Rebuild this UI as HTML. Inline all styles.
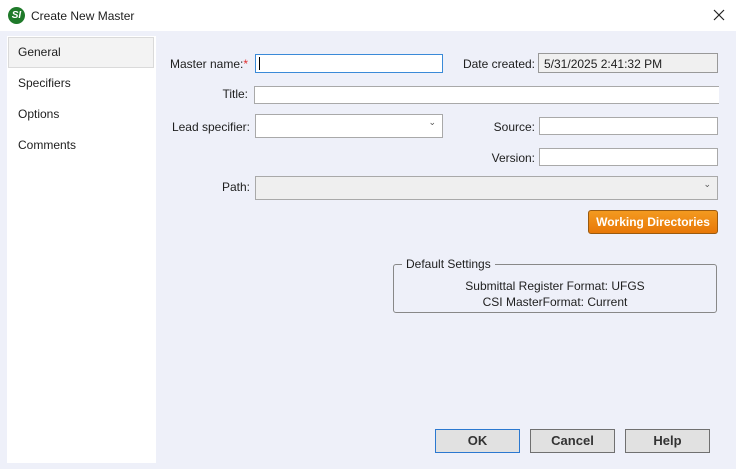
<!DOCTYPE html>
<html><head><style>
*{box-sizing:border-box;margin:0;padding:0}
body{width:736px;height:469px;position:relative;overflow:hidden;background:#eef0f9;font-family:"Liberation Sans",sans-serif;font-size:12px;color:#1e1e1e}
.a{position:absolute}
.tb{left:0;top:0;width:736px;height:31px;background:#fff}
.lbl{position:absolute;text-align:right;font-size:12px}
.in{position:absolute;background:#fff;border:1px solid #a9a9a9;height:19px}
.btn{position:absolute;background:#e1e1e1;border:1px solid #707070;height:24px;font-weight:bold;font-size:13px;text-align:center;line-height:22px;color:#333}
</style></head><body>
<div class="a tb"></div>
<div class="a" style="left:8px;top:7px;width:17px;height:17px;border-radius:50%;background:#1f7a2a;color:#fff;font-size:10px;font-weight:bold;font-style:italic;text-align:center;line-height:17px">SI</div>
<div class="a" style="left:31px;top:9px;font-size:12px">Create New Master</div>
<svg class="a" style="left:713px;top:9px" width="12" height="12"><path d="M1 1L11 11M11 1L1 11" stroke="#222" stroke-width="1.2"/></svg>
<div class="a" style="left:7px;top:36px;width:149px;height:427px;background:#fff"></div>
<div class="a" style="left:8px;top:37px;width:146px;height:31px;background:#f3f3f3;border:1px solid #dadada"></div>
<div class="a" style="left:18px;top:45px">General</div>
<div class="a" style="left:18px;top:76px">Specifiers</div>
<div class="a" style="left:18px;top:107px">Options</div>
<div class="a" style="left:18px;top:138px">Comments</div>

<div class="lbl" style="left:160px;width:88px;top:57px">Master name:<span style="color:#e03030">*</span></div>
<div class="in" style="left:255px;top:54px;width:188px;border-color:#3a8ad8"><div class="a" style="left:3px;top:2px;width:1px;height:13px;background:#000"></div></div>
<div class="lbl" style="left:440px;width:95px;top:57px">Date created:</div>
<div class="in" style="left:538px;top:53px;width:180px;height:20px;background:#f0f0f0;border-color:#999;padding:3px 5px">5/31/2025 2:41:32 PM</div>
<div class="lbl" style="left:160px;width:88px;top:87px">Title:</div>
<div class="in" style="left:254px;top:86px;width:465px;height:18px;border-right:none"></div>
<div class="lbl" style="left:160px;width:90px;top:120px">Lead specifier:</div>
<div class="in" style="left:255px;top:114px;width:188px;height:24px"><span class="a" style="right:6px;top:2px;font-size:9px;color:#555">⌄</span></div>
<div class="lbl" style="left:440px;width:95px;top:120px">Source:</div>
<div class="in" style="left:539px;top:117px;width:179px;height:18px"></div>
<div class="lbl" style="left:440px;width:95px;top:151px">Version:</div>
<div class="in" style="left:539px;top:148px;width:179px;height:18px"></div>
<div class="lbl" style="left:160px;width:90px;top:180px">Path:</div>
<div class="in" style="left:255px;top:176px;width:463px;height:24px;background:#efefef"><span class="a" style="right:6px;top:2px;font-size:9px;color:#555">⌄</span></div>
<div class="a" style="left:588px;top:210px;width:130px;height:24px;border-radius:3px;background:linear-gradient(#f39a20,#e87808);border:1px solid #9a5a10;color:#fff;font-weight:bold;font-size:12px;text-align:center;line-height:22px">Working Directories</div>

<div class="a" style="left:393px;top:264px;width:324px;height:49px;border:1px solid #888;border-radius:3px"></div>
<div class="a" style="left:402px;top:257px;padding:0 4px;background:#eef0f9">Default Settings</div>
<div class="a" style="left:393px;top:278px;width:324px;text-align:center;line-height:16px">Submittal Register Format: UFGS<br>CSI MasterFormat: Current</div>

<div class="btn" style="left:435px;top:429px;width:85px;border-color:#2b78d0">OK</div>
<div class="btn" style="left:530px;top:429px;width:85px">Cancel</div>
<div class="btn" style="left:625px;top:429px;width:85px">Help</div>
</body></html>
